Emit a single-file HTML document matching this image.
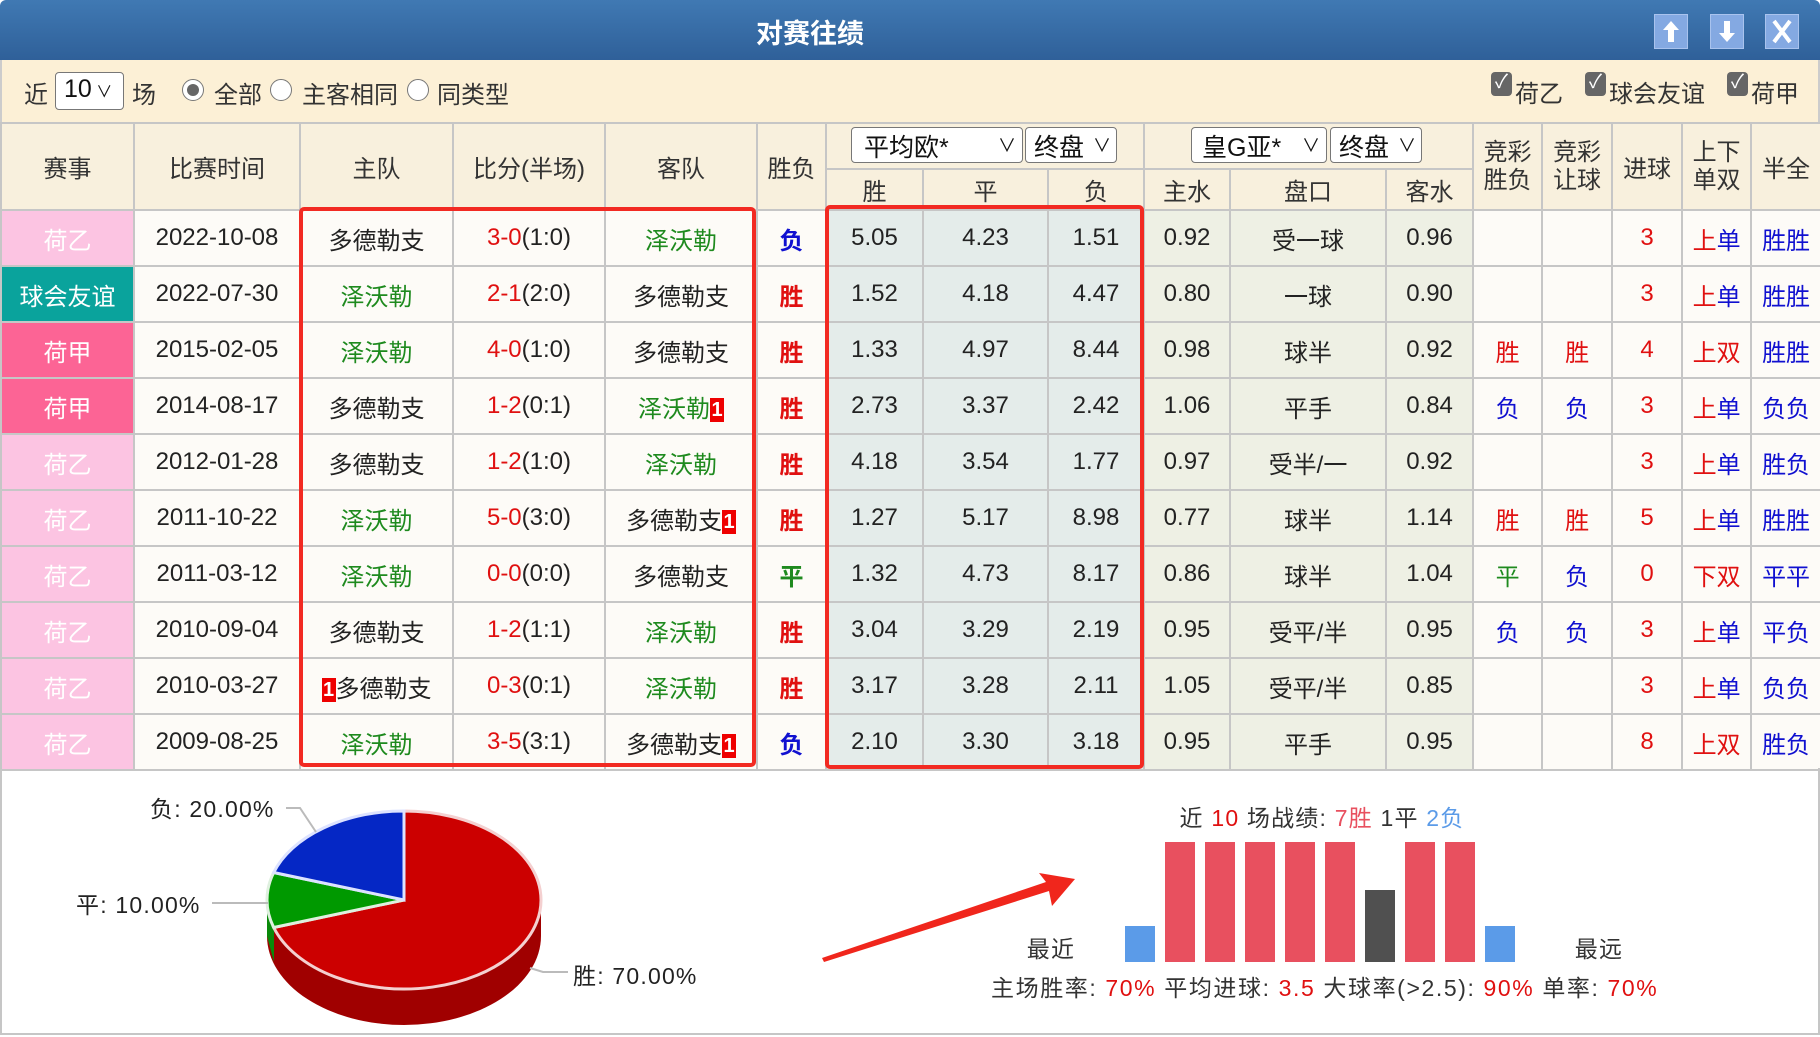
<!DOCTYPE html>
<html><head><meta charset="utf-8">
<style>
*{margin:0;padding:0;box-sizing:border-box}
body{width:1820px;height:1037px;background:#fff;font-family:"Liberation Sans","Noto Sans CJK SC",sans-serif;color:#222;position:relative;overflow:hidden}
.title{position:absolute;left:0;top:0;width:1820px;height:60px;background:linear-gradient(#4079b3,#2f6099);border-radius:6px 6px 0 0}
.title h1{position:absolute;left:0;width:1620px;text-align:center;top:12px;font-size:27px;color:#fff;font-weight:bold}
.btn{position:absolute;top:14px;width:34px;height:35px;background:#84a9e2;border:1px solid #a9c3ee}
.filter{position:absolute;left:0;top:60px;width:1820px;height:62px;background:#fcf0d6;border-left:2px solid #ccc;border-right:2px solid #ccc;font-size:24px;color:#333}
.filter span{position:absolute;top:15px}
.sel{position:absolute;border:1px solid #777;border-radius:4px;background:#fff;font-size:25px;color:#111}
.radio{position:absolute;top:19px;width:22px;height:22px;border:1px solid #777;border-radius:50%;background:#fff}
.cb{position:absolute;top:12px;width:21px;height:24px;background:#666;border-radius:4px;color:#fff;font-size:19px;text-align:center;line-height:22px}
table{position:absolute;left:0;top:122px;border-collapse:collapse;table-layout:fixed;width:1820px;font-size:24px}
td,th{border:2px solid #c6c6c6;text-align:center;font-weight:normal;padding:0;overflow:hidden;white-space:nowrap}
th{background:#f8f0dd;color:#333}
tr.d td{height:56px;background:#fdfbf7}
tr.d td.o{background:#e4ecea}
tr.d td.a{background:#eef0e4}
.ev1{background:#fcc4e2!important;color:#fff}
.ev2{background:#0aa39c!important;color:#fff}
.ev3{background:#fc6495!important;color:#fff}
.g{color:#1e8a1e}.r{color:#e01010}.b{color:#1010d0}
.bd{font-weight:bold}
.bad{display:inline-block;background:#e00;color:#fff;font-size:20px;line-height:24px;width:14px;vertical-align:1px;font-weight:bold}
.box{position:absolute;border:4px solid #f22a22;border-radius:5px}
.bottom{position:absolute;left:0;top:768px;width:1820px;height:267px;border:2px solid #c6c6c6;border-top:none}
</style></head><body>
<div class="title"><h1>对赛往绩</h1>
<div class="btn" style="left:1654px"><svg width="32" height="33"><path d="M16 6 L8 15 H13 V27 H19 V15 H24 Z" fill="#fff"/></svg></div>
<div class="btn" style="left:1710px"><svg width="32" height="33"><path d="M16 27 L8 18 H13 V6 H19 V18 H24 Z" fill="#fff"/></svg></div>
<div class="btn" style="left:1765px"><svg width="32" height="33"><path d="M8 6 L24 27 M24 6 L8 27" stroke="#fff" stroke-width="4"/></svg></div>
</div>
<div class="filter">
<span style="left:22px">近</span>
<div class="sel" style="left:53px;top:12px;width:69px;height:38px;padding:2px 0 0 8px">10<span style="position:static;font-size:16px"> ∨</span></div>
<span style="left:130px">场</span>
<div class="radio" style="left:180px"><div style="margin:4px;width:12px;height:12px;border-radius:50%;background:#666"></div></div>
<span style="left:212px">全部</span>
<div class="radio" style="left:268px"></div>
<span style="left:300px">主客相同</span>
<div class="radio" style="left:405px"></div>
<span style="left:435px">同类型</span>
<div class="cb" style="left:1489px">✓</div><span style="left:1513px;top:14px">荷乙</span>
<div class="cb" style="left:1583px">✓</div><span style="left:1607px;top:14px">球会友谊</span>
<div class="cb" style="left:1725px">✓</div><span style="left:1749px;top:14px">荷甲</span>
</div>
<table>
<colgroup><col style="width:133px"><col style="width:166px"><col style="width:153px"><col style="width:152px"><col style="width:152px"><col style="width:69px"><col style="width:97px"><col style="width:125px"><col style="width:96px"><col style="width:86px"><col style="width:156px"><col style="width:87px"><col style="width:69px"><col style="width:70px"><col style="width:70px"><col style="width:69px"><col style="width:70px"></colgroup>
<tr style="height:46px"><th rowspan="2">赛事</th><th rowspan="2">比赛时间</th><th rowspan="2">主队</th><th rowspan="2">比分(半场)</th><th rowspan="2">客队</th><th rowspan="2">胜负</th><th colspan="3"></th><th colspan="3"></th><th rowspan="2" style="line-height:28px">竞彩<br>胜负</th><th rowspan="2" style="line-height:28px">竞彩<br>让球</th><th rowspan="2">进球</th><th rowspan="2" style="line-height:28px">上下<br>单双</th><th rowspan="2">半全</th></tr>
<tr style="height:41px"><th>胜</th><th>平</th><th>负</th><th>主水</th><th>盘口</th><th>客水</th></tr>
<tr class="d"><td class="ev1">荷乙</td><td>2022-10-08</td><td>多德勒支</td><td><span class="r">3-0</span>(1:0)</td><td class="g">泽沃勒</td><td class="b bd">负</td><td class="o">5.05</td><td class="o">4.23</td><td class="o">1.51</td><td class="a">0.92</td><td class="a">受一球</td><td class="a">0.96</td><td></td><td></td><td class="r">3</td><td><span class="r">上</span><span class="b">单</span></td><td class="b">胜胜</td></tr>
<tr class="d"><td class="ev2">球会友谊</td><td>2022-07-30</td><td class="g">泽沃勒</td><td><span class="r">2-1</span>(2:0)</td><td>多德勒支</td><td class="r bd">胜</td><td class="o">1.52</td><td class="o">4.18</td><td class="o">4.47</td><td class="a">0.80</td><td class="a">一球</td><td class="a">0.90</td><td></td><td></td><td class="r">3</td><td><span class="r">上</span><span class="b">单</span></td><td class="b">胜胜</td></tr>
<tr class="d"><td class="ev3">荷甲</td><td>2015-02-05</td><td class="g">泽沃勒</td><td><span class="r">4-0</span>(1:0)</td><td>多德勒支</td><td class="r bd">胜</td><td class="o">1.33</td><td class="o">4.97</td><td class="o">8.44</td><td class="a">0.98</td><td class="a">球半</td><td class="a">0.92</td><td class="r">胜</td><td class="r">胜</td><td class="r">4</td><td class="r">上双</td><td class="b">胜胜</td></tr>
<tr class="d"><td class="ev3">荷甲</td><td>2014-08-17</td><td>多德勒支</td><td><span class="r">1-2</span>(0:1)</td><td class="g">泽沃勒<span class="bad">1</span></td><td class="r bd">胜</td><td class="o">2.73</td><td class="o">3.37</td><td class="o">2.42</td><td class="a">1.06</td><td class="a">平手</td><td class="a">0.84</td><td class="b">负</td><td class="b">负</td><td class="r">3</td><td><span class="r">上</span><span class="b">单</span></td><td class="b">负负</td></tr>
<tr class="d"><td class="ev1">荷乙</td><td>2012-01-28</td><td>多德勒支</td><td><span class="r">1-2</span>(1:0)</td><td class="g">泽沃勒</td><td class="r bd">胜</td><td class="o">4.18</td><td class="o">3.54</td><td class="o">1.77</td><td class="a">0.97</td><td class="a">受半/一</td><td class="a">0.92</td><td></td><td></td><td class="r">3</td><td><span class="r">上</span><span class="b">单</span></td><td class="b">胜负</td></tr>
<tr class="d"><td class="ev1">荷乙</td><td>2011-10-22</td><td class="g">泽沃勒</td><td><span class="r">5-0</span>(3:0)</td><td>多德勒支<span class="bad">1</span></td><td class="r bd">胜</td><td class="o">1.27</td><td class="o">5.17</td><td class="o">8.98</td><td class="a">0.77</td><td class="a">球半</td><td class="a">1.14</td><td class="r">胜</td><td class="r">胜</td><td class="r">5</td><td><span class="r">上</span><span class="b">单</span></td><td class="b">胜胜</td></tr>
<tr class="d"><td class="ev1">荷乙</td><td>2011-03-12</td><td class="g">泽沃勒</td><td><span class="r">0-0</span>(0:0)</td><td>多德勒支</td><td class="g bd">平</td><td class="o">1.32</td><td class="o">4.73</td><td class="o">8.17</td><td class="a">0.86</td><td class="a">球半</td><td class="a">1.04</td><td class="g">平</td><td class="b">负</td><td class="r">0</td><td class="r">下双</td><td class="b">平平</td></tr>
<tr class="d"><td class="ev1">荷乙</td><td>2010-09-04</td><td>多德勒支</td><td><span class="r">1-2</span>(1:1)</td><td class="g">泽沃勒</td><td class="r bd">胜</td><td class="o">3.04</td><td class="o">3.29</td><td class="o">2.19</td><td class="a">0.95</td><td class="a">受平/半</td><td class="a">0.95</td><td class="b">负</td><td class="b">负</td><td class="r">3</td><td><span class="r">上</span><span class="b">单</span></td><td class="b">平负</td></tr>
<tr class="d"><td class="ev1">荷乙</td><td>2010-03-27</td><td><span class="bad">1</span>多德勒支</td><td><span class="r">0-3</span>(0:1)</td><td class="g">泽沃勒</td><td class="r bd">胜</td><td class="o">3.17</td><td class="o">3.28</td><td class="o">2.11</td><td class="a">1.05</td><td class="a">受平/半</td><td class="a">0.85</td><td></td><td></td><td class="r">3</td><td><span class="r">上</span><span class="b">单</span></td><td class="b">负负</td></tr>
<tr class="d"><td class="ev1">荷乙</td><td>2009-08-25</td><td class="g">泽沃勒</td><td><span class="r">3-5</span>(3:1)</td><td>多德勒支<span class="bad">1</span></td><td class="b bd">负</td><td class="o">2.10</td><td class="o">3.30</td><td class="o">3.18</td><td class="a">0.95</td><td class="a">平手</td><td class="a">0.95</td><td></td><td></td><td class="r">8</td><td class="r">上双</td><td class="b">胜负</td></tr>
</table>
<div class="sel" style="left:851px;top:127px;width:172px;height:36px;padding:0 0 0 12px">平均欧*<span style="position:absolute;right:6px;top:4px;font-size:18px">∨</span></div>
<div class="sel" style="left:1025px;top:127px;width:92px;height:36px;padding:0 0 0 8px">终盘<span style="position:absolute;right:5px;top:4px;font-size:18px">∨</span></div>
<div class="sel" style="left:1191px;top:127px;width:136px;height:36px;padding:0 0 0 10px">皇G亚*<span style="position:absolute;right:6px;top:4px;font-size:18px">∨</span></div>
<div class="sel" style="left:1330px;top:127px;width:92px;height:36px;padding:0 0 0 8px">终盘<span style="position:absolute;right:5px;top:4px;font-size:18px">∨</span></div>
<div class="box" style="left:299px;top:207px;width:457px;height:560px"></div>
<div class="box" style="left:825px;top:205px;width:319px;height:564px"></div>
<div class="bottom"></div>
<svg style="position:absolute;left:0;top:0" width="1820" height="1037">
<g font-family="Liberation Sans,Noto Sans CJK SC,sans-serif" font-size="23" letter-spacing="1.2" fill="#222">
<ellipse cx="404" cy="936" rx="137" ry="89" fill="#a00000"/>
<rect x="267" y="900" width="274" height="36" fill="#a00000"/>
<path d="M267 900 L274 928 L274 962 L267 936Z" fill="#0a8a0a"/>
<path d="M404 900 L404 811 A137 89 0 1 1 273.7 927.5 Z" fill="#cc0000" stroke="#f4d0d0" stroke-width="3"/>
<path d="M404 900 L273.7 927.5 A137 89 0 0 1 273.7 872.5 Z" fill="#009900" stroke="#dff0df" stroke-width="3"/>
<path d="M404 900 L273.7 872.5 A137 89 0 0 1 404 811 Z" fill="#0527c5" stroke="#dde3ff" stroke-width="3"/>
<path d="M286 808 L300 808 L316 832" stroke="#bbb" stroke-width="2" fill="none"/>
<path d="M212 903 L268 903" stroke="#bbb" stroke-width="2" fill="none"/>
<path d="M530 968 L543 972 L568 972" stroke="#bbb" stroke-width="2" fill="none"/>
<text x="150" y="817">负: 20.00%</text>
<text x="76" y="913">平: 10.00%</text>
<text x="573" y="984">胜: 70.00%</text>
<polygon points="822,958 1046,882 1039,873 1075,879 1052,906 1049,891 824,962" fill="#f0261c"/>
<rect x="1125" y="926" width="30" height="36" fill="#5b9be8"/>
<rect x="1165" y="842" width="30" height="120" fill="#e8505f"/>
<rect x="1205" y="842" width="30" height="120" fill="#e8505f"/>
<rect x="1245" y="842" width="30" height="120" fill="#e8505f"/>
<rect x="1285" y="842" width="30" height="120" fill="#e8505f"/>
<rect x="1325" y="842" width="30" height="120" fill="#e8505f"/>
<rect x="1365" y="890" width="30" height="72" fill="#505050"/>
<rect x="1405" y="842" width="30" height="120" fill="#e8505f"/>
<rect x="1445" y="842" width="30" height="120" fill="#e8505f"/>
<rect x="1485" y="926" width="30" height="36" fill="#5b9be8"/>
<text x="1322" y="826" text-anchor="middle" fill="#333">近 <tspan fill="#e01010">10</tspan> 场战绩: <tspan fill="#e8505f">7胜</tspan> 1平 <tspan fill="#5b9be8">2负</tspan></text>
<text x="1051" y="957" text-anchor="middle" fill="#333">最近</text>
<text x="1599" y="957" text-anchor="middle" fill="#333">最远</text>
<text x="991" y="996" fill="#333" letter-spacing="1.6">主场胜率: <tspan fill="#e01010">70%</tspan> 平均进球: <tspan fill="#e01010">3.5</tspan> 大球率(&gt;2.5): <tspan fill="#e01010">90%</tspan> 单率: <tspan fill="#e01010">70%</tspan></text>
</g></svg>
</body></html>
